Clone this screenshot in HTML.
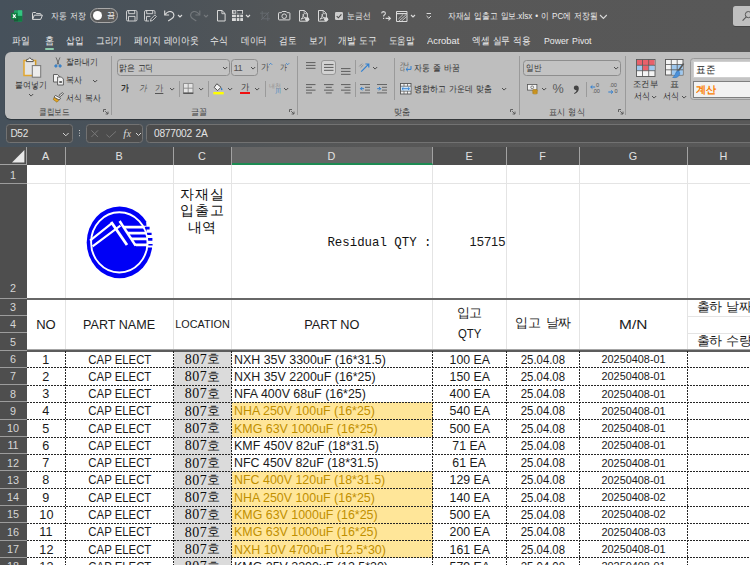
<!DOCTYPE html>
<html lang="ko"><head><meta charset="utf-8"><title>자재실 입출고 일보.xlsx - Excel</title>
<style>
*{box-sizing:border-box;margin:0;padding:0}
html,body{width:750px;height:565px;overflow:hidden}
body{position:relative;font-family:"Liberation Sans",sans-serif;font-size:11px;color:#e6e6e6;
 background:linear-gradient(to right,#46515b 0%,#4a5259 20%,#535658 38%,#575757 50%,#585858 100%)}
.abs,.ab{position:absolute}
.ab{white-space:nowrap;line-height:12px;height:12px;overflow:visible;word-spacing:1px;transform-origin:0 50%}
svg{position:absolute;overflow:visible}
/* ribbon */
#panel{position:absolute;left:5px;top:51.7px;width:760px;height:67.3px;background:#bebebe;border-radius:6px 0 0 6px;box-shadow:0 1px 1px rgba(20,25,30,.55)}
#panel .ab{color:#333}
#panel .lbl{color:#555}

.isep{position:absolute;width:1.2px;background:#a2a2a2}
.box{position:absolute;border:1px solid #8e8e8e;border-radius:3.5px;background:#c3c3c3}
.dd{position:absolute;width:5px;height:5px}
/* formula bar */
.fbox{position:absolute;top:124.3px;height:18.4px;border:1px solid #727272;border-radius:3.5px;background:#4c4c4c}
/* sheet */
#colhdr{position:absolute;left:0;top:147px;width:750px;height:18px;background:#4e4e4e}
.ch{position:absolute;top:0;height:18px;border-right:1px solid #a2a2a2;text-align:center;font-size:10.8px;line-height:19px;color:#e2e2e2}
.ch.sel{background:#656565;border-bottom:2px solid #1d8a52}
#corner{position:absolute;left:0;top:0;width:26.5px;height:18px;border-right:1px solid #a2a2a2;border-bottom:1px solid #a2a2a2}
#rowhdr{position:absolute;left:0;top:165px;width:26.5px;height:400px;background:#4e4e4e}
.rh{position:absolute;left:0;width:26.5px;border-bottom:1px solid #9c9c9c;text-align:center;font-size:10.8px;color:#d6d6d6;line-height:17px}
.rh span{position:absolute;left:0;width:26px;bottom:-0.2px;height:16px;line-height:16px}
#grid{position:absolute;left:26.5px;top:165px;width:724px;height:400px;background:#fff;overflow:hidden;color:#1a1a1a}
#grid div{position:absolute}
.vg{top:0;width:1px;height:185.5px;background:#e4e4e4}
.hg{left:0;width:724px;height:1px;background:#e4e4e4}
.vd{width:1px;top:186px;height:220px;background:repeating-linear-gradient(to bottom,#262626 0,#262626 2px,transparent 2px,transparent 3px)}
.hd{left:0;width:724px;height:1px;background:repeating-linear-gradient(to right,#262626 0,#262626 2px,transparent 2px,transparent 3px)}
.c{height:17.27px;line-height:17.3px;font-size:13.3px;text-align:center;white-space:nowrap;overflow:hidden}
.c b{display:inline-block;font-weight:normal;transform:scaleX(.855);transform-origin:50% 50%}
.c.l{text-align:left}
.c.l b{transform-origin:0 50% !important}
.c.s{font-size:11.4px}
.c.sf{font-family:"Liberation Serif",serif;font-size:14px;color:#0c0c0c}
.c.sf b{transform:none;letter-spacing:.55px}
.y{color:#bf8f00}
.fy{background:#ffe699}
.fg{background:#dbdbdb}
.c.k b{transform:none;letter-spacing:-0.6px;font-size:13px}
.ttl{text-align:center;font-family:"Liberation Sans",sans-serif;font-size:14px;line-height:16.6px;color:#111;letter-spacing:.6px;padding-right:.4px}
.ttl b{display:block;font-weight:normal}
.mono{font-family:"Liberation Mono",monospace;font-size:12.4px;line-height:14px;color:#111;white-space:nowrap;text-align:right}
.c.sf i{font-family:"Liberation Sans",sans-serif;font-style:normal;font-size:12.8px;letter-spacing:0;color:#151515;position:relative;top:-0.6px}
</style></head>
<body>
<!-- title bar -->
<div id="titlebar">
<svg style="left:10.5px;top:9.5px" width="11.5" height="12" viewBox="0 0 11.5 12"><rect x="3" y="0.3" width="8.2" height="11.2" rx="1" fill="#21a366"/><rect x="7" y="0.3" width="4.2" height="5.6" fill="#33c481"/><rect x="7" y="5.9" width="4.2" height="5.6" fill="#107c41"/><rect x="3" y="5.9" width="4" height="5.6" fill="#185c37"/><rect x="0" y="2.8" width="6.6" height="6.6" rx="0.8" fill="#107c41"/><path d="M1.9 4.3L4.7 7.9M4.7 4.3L1.9 7.9" stroke="#fff" stroke-width="1.1"/></svg>
<svg style="left:32px;top:11.5px" width="11" height="8" viewBox="0 0 11 8"><path d="M0.5 7.2V1.2Q0.5 0.5 1.2 0.5H3.6L4.6 1.6H8.2Q8.9 1.6 8.9 2.3V3.1" fill="none" stroke="#dadada" stroke-width="1"/><path d="M0.6 7.4L2.3 3.2H10.4L8.7 7.4Z" fill="none" stroke="#dadada" stroke-width="1" stroke-linejoin="round"/></svg>
<div class="ab" style="left:51px;top:9.6px;font-size:9.4px;transform:scaleX(0.871);">자동 저장</div>
<div class="abs" style="left:90px;top:8px;width:28px;height:14.5px;border:1px solid #a9a9a9;border-radius:8px;background:#5a5a5a"></div>
<div class="abs" style="left:92.6px;top:10.6px;width:9.2px;height:9.2px;border-radius:5px;background:#fff"></div>
<div class="ab" style="left:106.5px;top:9.6px;font-size:8.2px;color:#f0f0f0;">끔</div>
<svg style="left:125.5px;top:10px" width="11.5" height="11.5" viewBox="0 0 11.5 11.5"><rect x="0.5" y="0.5" width="10.5" height="10.5" rx="1.4" fill="none" stroke="#dadada" stroke-width=".9"/><path d="M2.7 0.6V3.7H8.7V0.6M2.5 10.9V6.4H9V10.9" fill="none" stroke="#dadada" stroke-width=".9"/></svg>
<svg style="left:144px;top:10px" width="13" height="11.5" viewBox="0 0 13 11.5"><path d="M5 11H1.9Q0.5 11 0.5 9.6V1.9Q0.5 0.5 1.9 0.5H9.6Q11 0.5 11 1.9V4.4" fill="none" stroke="#dadada" stroke-width=".9"/><path d="M2.7 0.6V3.7H8.7V0.6M2.5 10.9V6.4H6.4" fill="none" stroke="#dadada" stroke-width=".9"/><path d="M6.4 11.2L7 8.8L10.8 5L12.4 6.6L8.6 10.4Z" fill="none" stroke="#dadada" stroke-width=".85"/></svg>
<svg style="left:164px;top:10.3px" width="10.5" height="11.5" viewBox="0 0 10.5 11.5"><path d="M0.7 0.6V5H5.1" fill="none" stroke="#dadada" stroke-width="1.1"/><path d="M0.9 4.8Q3.6 0.9 6.9 1.6Q10 2.6 9.9 5.6Q9.6 7.6 7.6 8.8L4.2 11" fill="none" stroke="#dadada" stroke-width="1.1"/></svg>
<svg style="left:178.0px;top:15.2px" width="4" height="2" viewBox="0 0 4 2"><path d="M0 0L2.0 2L4 0" fill="none" stroke="#dadada" stroke-width="1.1"/></svg>
<svg style="left:190px;top:10.3px" width="10.5" height="11.5" viewBox="0 0 10.5 11.5"><g transform="translate(10.5,0) scale(-1,1)"><path d="M0.7 0.6V5H5.1" fill="none" stroke="#74787c" stroke-width="1.1"/><path d="M0.9 4.8Q3.6 0.9 6.9 1.6Q10 2.6 9.9 5.6Q9.6 7.6 7.6 8.8L4.2 11" fill="none" stroke="#74787c" stroke-width="1.1"/></g></svg>
<svg style="left:203.7px;top:15.2px" width="4" height="2" viewBox="0 0 4 2"><path d="M0 0L2.0 2L4 0" fill="none" stroke="#74787c" stroke-width="1.1"/></svg>
<svg style="left:216.8px;top:10px" width="8.6" height="11.5" viewBox="0 0 8.6 11.5"><path d="M0.5 0.5H5L8.1 3.6V11H0.5Z" fill="none" stroke="#dadada" stroke-width="1" stroke-linejoin="round"/><path d="M4.9 0.6V3.7H8" fill="none" stroke="#dadada" stroke-width=".9"/></svg>
<svg style="left:232.2px;top:10.2px" width="11" height="11" viewBox="0 0 11 11"><rect x="0" y="0" width="11" height="11" fill="#dadada"/><rect x="5.2" y="0.9" width="4.9" height="2.8" fill="#4d5257"/><path d="M0 4.3H11M0 7.6H11M4.4 0V11M7.8 4.3V11" stroke="#4d5257" stroke-width=".9" fill="none"/><path d="M1 1.2H3.6M2.3 1.2V3.4M1.2 2.4H3.4" stroke="#4d5257" stroke-width=".6"/></svg>
<svg style="left:246.3px;top:15.2px" width="4" height="2" viewBox="0 0 4 2"><path d="M0 0L2.0 2L4 0" fill="none" stroke="#dadada" stroke-width="1.1"/></svg>
<svg style="left:260px;top:11px" width="10" height="10" viewBox="0 0 10 10"><path d="M2.2 0V7.8H10M0 2.2H7.8V10M1 9L9 1" fill="none" stroke="#666b70" stroke-width=".9"/></svg>
<svg style="left:278px;top:11.3px" width="12.5" height="9.5" viewBox="0 0 12.5 9.5"><path d="M0.5 2.3Q0.5 1.7 1.1 1.7H3.3L4.2 0.5H8.2L9.1 1.7H11.3Q11.9 1.7 11.9 2.3V8.3Q11.9 8.9 11.3 8.9H1.1Q0.5 8.9 0.5 8.3Z" fill="none" stroke="#dadada"/><circle cx="6.2" cy="5.2" r="2.3" fill="none" stroke="#dadada"/></svg>
<svg style="left:299px;top:9.8px" width="10.5" height="11.8" viewBox="0 0 10.5 11.8"><path d="M0.5 0.5H5.4L8.4 3.5V11.2H0.5Z" fill="none" stroke="#dadada" stroke-linejoin="round"/><path d="M5.2 0.6V3.7H8.3" fill="none" stroke="#dadada" stroke-width=".8"/><path d="M2 9.2Q3.6 8 4.4 5.3Q4.7 3.9 4.1 4.1Q3.6 4.6 4.6 6.4Q5.6 8.2 7.2 8.4Q8 8.3 7.2 7.8Q5.4 7.4 2 9.2Z" fill="none" stroke="#dadada" stroke-width=".9"/><circle cx="8.2" cy="9.3" r="2.1" fill="#dadada"/></svg>
<svg style="left:318.3px;top:9.8px" width="10.5" height="11.8" viewBox="0 0 10.5 11.8"><path d="M0.5 0.5H5.4L8.4 3.5V11.2H0.5Z" fill="none" stroke="#dadada" stroke-linejoin="round"/><path d="M5.2 0.6V3.7H8.3" fill="none" stroke="#dadada" stroke-width=".8"/><path d="M2 9.2Q3.6 8 4.4 5.3Q4.7 3.9 4.1 4.1Q3.6 4.6 4.6 6.4Q5.6 8.2 7.2 8.4Q8 8.3 7.2 7.8Q5.4 7.4 2 9.2Z" fill="none" stroke="#dadada" stroke-width=".9"/><circle cx="8.2" cy="9.3" r="2.1" fill="#dadada"/></svg>
<svg style="left:335px;top:12.3px" width="8" height="8" viewBox="0 0 8 8"><rect x="0" y="0" width="8" height="8" rx="1.2" fill="#cdcdcd"/><path d="M1.7 4.1L3.4 5.8L6.4 2.3" fill="none" stroke="#4a4a4a" stroke-width="1.1"/></svg>
<div class="ab" style="left:346.6px;top:9.9px;font-size:9.2px;transform:scaleX(0.863);">눈금선</div>
<svg style="left:380.5px;top:11px" width="10" height="10" viewBox="0 0 10 10"><path d="M0.6 2.4Q0.8 0.6 2.6 0.6Q4.4 0.7 4.4 2.3Q4.4 3.3 3.3 4Q2.6 4.5 2.6 5.6" fill="none" stroke="#dadada" stroke-width="1.1"/><rect x="2" y="6.8" width="1.2" height="1.2" fill="#dadada"/><path d="M4.6 7.4H9.3M7.4 5.4L9.4 7.4L7.4 9.4" fill="none" stroke="#dadada" stroke-width="1.1"/></svg>
<svg style="left:396px;top:10.5px" width="11.5" height="11" viewBox="0 0 11.5 11"><path d="M0.5 0.5H11V10.5H0.5Z" fill="none" stroke="#dadada" stroke-width="1"/><path d="M0.5 2.6H11" stroke="#dadada" stroke-width="1.2"/><path d="M3 10L10.4 3.4M5.4 10.2L10.6 5.6M2.4 8L7 3.6" fill="none" stroke="#dadada" stroke-width=".8"/></svg>
<svg style="left:411.3px;top:15.2px" width="4" height="2" viewBox="0 0 4 2"><path d="M0 0L2.0 2L4 0" fill="none" stroke="#dadada" stroke-width="1.1"/></svg>
<svg style="left:426px;top:12.6px" width="5.6" height="6" viewBox="0 0 5.6 6"><path d="M0.6 0.5H5M0.6 3L2.8 5.2L5 3" fill="none" stroke="#dadada" stroke-width="1"/></svg>
<div class="ab" style="left:448px;top:9.7px;font-size:9.4px;transform:scaleX(0.860);color:#ececec;">자재실 입출고 일보.xlsx • 이 PC에 저장됨</div>
<svg style="left:600.4px;top:14.5px" width="6.8" height="3.4" viewBox="0 0 6.8 3.4"><path d="M0 0L3.4 3.4L6.8 0" fill="none" stroke="#dadada" stroke-width="1.1"/></svg>
<div class="abs" style="left:733.4px;top:5.8px;width:30px;height:20.4px;border-radius:2.5px;background:#bfbfbf;box-shadow:0 1px 0 rgba(0,0,0,.22)"></div>
<svg style="left:741.5px;top:11px" width="9" height="10" viewBox="0 0 9 10"><circle cx="6.4" cy="3.6" r="3.1" fill="none" stroke="#555" stroke-width="1"/><path d="M4.3 5.9L0.6 9.6" stroke="#555" stroke-width="1.1"/></svg>
</div>
<!-- tabs -->
<div id="tabs">
<div class="ab" style="left:12px;top:35.3px;font-size:9.8px;transform:scaleX(0.885);color:#ececec;">파일</div>
<div class="ab" style="left:45px;top:35.3px;font-size:9.8px;transform:scaleX(0.913);color:#ececec;">홈</div>
<div class="ab" style="left:66px;top:35.3px;font-size:9.8px;transform:scaleX(0.865);color:#ececec;">삽입</div>
<div class="ab" style="left:96px;top:35.3px;font-size:9.8px;transform:scaleX(0.856);color:#ececec;">그리기</div>
<div class="ab" style="left:134px;top:35.3px;font-size:9.8px;transform:scaleX(0.878);color:#ececec;">페이지 레이아웃</div>
<div class="ab" style="left:210px;top:35.3px;font-size:9.8px;transform:scaleX(0.885);color:#ececec;">수식</div>
<div class="ab" style="left:241px;top:35.3px;font-size:9.8px;transform:scaleX(0.856);color:#ececec;">데이터</div>
<div class="ab" style="left:279.2px;top:35.3px;font-size:9.8px;transform:scaleX(0.865);color:#ececec;">검토</div>
<div class="ab" style="left:309px;top:35.3px;font-size:9.8px;transform:scaleX(0.875);color:#ececec;">보기</div>
<div class="ab" style="left:338.2px;top:35.3px;font-size:9.8px;transform:scaleX(0.880);color:#ececec;">개발 도구</div>
<div class="ab" style="left:389.2px;top:35.3px;font-size:9.8px;transform:scaleX(0.849);color:#ececec;">도움말</div>
<div class="ab" style="left:427.4px;top:35.3px;font-size:9.6px;transform:scaleX(0.979);color:#ececec;">Acrobat</div>
<div class="ab" style="left:472px;top:35.3px;font-size:9.8px;transform:scaleX(0.870);color:#ececec;">엑셀 실무 적용</div>
<div class="ab" style="left:544px;top:35.3px;font-size:9.6px;transform:scaleX(0.911);color:#ececec;">Power Pivot</div>
<div class="abs" style="left:45px;top:48.4px;width:8.7px;height:1.6px;border-radius:1px;background:#8ccbab"></div>
</div>
<!-- ribbon -->
<div id="ribbon">
<div id="panel"></div>
<svg style="left:23px;top:56.6px" width="19" height="21.5" viewBox="0 0 19 21.5"><path d="M1 3.4H12.6V18.6H1Z" fill="#e3e3e3" stroke="#e2a62e" stroke-width="1.5"/><path d="M12.6 3.4V9" stroke="#c9952b" stroke-width="1"/><path d="M3.4 4.6V3.2Q3.4 2.4 4.2 2.4H5.2L6.8 0.6L8.4 2.4H9.4Q10.2 2.4 10.2 3.2V4.6Z" fill="#f4f4f4" stroke="#444" stroke-width=".9" stroke-linejoin="round"/><rect x="9.3" y="8.6" width="8.4" height="11.6" fill="#ececec" stroke="#767676" stroke-width="1"/></svg>
<div class="ab" style="left:15px;top:79.3px;font-size:9.4px;transform:scaleX(0.881);color:#2e2e2e;">붙여넣기</div>
<svg style="left:29.4px;top:94.2px" width="4.2" height="2.1" viewBox="0 0 4.2 2.1"><path d="M0 0L2.1 2.1L4.2 0" fill="none" stroke="#4c4c4c" stroke-width="1"/></svg>
<svg style="left:53.6px;top:57.3px" width="8" height="11" viewBox="0 0 8 11"><path d="M2 0.4L5 7.6M6 0.4L3 7.6" stroke="#555" stroke-width=".8" fill="none"/><circle cx="1.9" cy="9" r="1.15" fill="#5b9bd5" stroke="#1e6fbf" stroke-width=".8"/><circle cx="6.1" cy="9" r="1.15" fill="#5b9bd5" stroke="#1e6fbf" stroke-width=".8"/></svg>
<div class="ab" style="left:66px;top:56.3px;font-size:9.4px;transform:scaleX(0.881);color:#2e2e2e;">잘라내기</div>
<svg style="left:52.5px;top:74px" width="11" height="11.5" viewBox="0 0 11 11.5"><path d="M0.5 0.5H4.6L6.4 2.3V8H0.5Z" fill="#f2f2f2" stroke="#555" stroke-width=".9"/><path d="M4.6 3H8.4L10.4 5V11H4.6Z" fill="#f2f2f2" stroke="#555" stroke-width=".9"/><rect x="6.3" y="7" width="2.6" height="2" fill="#666"/></svg>
<div class="ab" style="left:66px;top:74.3px;font-size:9.4px;transform:scaleX(0.895);color:#2e2e2e;">복사</div>
<svg style="left:92.9px;top:79.5px" width="4.2" height="2.1" viewBox="0 0 4.2 2.1"><path d="M0 0L2.1 2.1L4.2 0" fill="none" stroke="#4c4c4c" stroke-width="1"/></svg>
<svg style="left:53px;top:91.5px" width="11" height="10.5" viewBox="0 0 11 10.5"><path d="M6 3.2L9.5 0.6L10.5 1.8L7.2 4.6Z" fill="#ddd" stroke="#444" stroke-width=".8"/><path d="M2.4 3.4L7.6 6.2L6.2 8L1 5.2Z" fill="#f4f4f4" stroke="#444" stroke-width=".8"/><path d="M1 5.6L5.8 8.4L4 10.2L0.3 7.6Z" fill="#e8a723" stroke="#8a6a1a" stroke-width=".6"/></svg>
<div class="ab" style="left:66px;top:91.5px;font-size:9.4px;transform:scaleX(0.876);color:#2e2e2e;">서식 복사</div>
<div class="ab" style="left:39px;top:106.0px;font-size:9.4px;transform:scaleX(0.852);color:#3e3e3e;">클립보드</div>
<svg style="left:103px;top:109px" width="5.5" height="5.5" viewBox="0 0 5.5 5.5"><path d="M0.5 3V0.5H3M2.2 2.2L5 5M5 2.6V5H2.6" fill="none" stroke="#555" stroke-width=".9"/></svg>
<div class="isep" style="left:111px;top:55.5px;height:59.0px;background:#9a9a9a"></div>
<div class="box" style="left:117px;top:59.4px;width:112.5px;height:16.3px"></div>
<div class="ab" style="left:119.3px;top:61.6px;font-size:9.2px;transform:scaleX(0.867);color:#2e2e2e;">맑은 고딕</div>
<svg style="left:222.9px;top:67.0px" width="4.2" height="2.1" viewBox="0 0 4.2 2.1"><path d="M0 0L2.1 2.1L4.2 0" fill="none" stroke="#4c4c4c" stroke-width="1"/></svg>
<div class="box" style="left:231.2px;top:59.4px;width:26.5px;height:16.3px"></div>
<div class="ab" style="left:233.4px;top:61.7px;font-size:9.4px;letter-spacing:-0.30px;color:#555;">11</div>
<svg style="left:250.9px;top:67.0px" width="4.2" height="2.1" viewBox="0 0 4.2 2.1"><path d="M0 0L2.1 2.1L4.2 0" fill="none" stroke="#4c4c4c" stroke-width="1"/></svg>
<div class="ab" style="left:261.3px;top:61.3px;font-size:9.2px;transform:scaleX(0.902);color:#444;">가</div>
<svg style="left:269.3px;top:62.6px" width="3.2" height="1.9" viewBox="0 0 3.2 1.9"><path d="M0.2 1.8L1.7 0.3L3.2 1.8" fill="none" stroke="#2f7fd0" stroke-width=".9"/></svg>
<div class="ab" style="left:279.8px;top:61.9px;font-size:8px;transform:scaleX(0.861);color:#444;">가</div>
<svg style="left:286.2px;top:63px" width="3.2" height="1.9" viewBox="0 0 3.2 1.9"><path d="M0.2 0.2L1.7 1.7L3.2 0.2" fill="none" stroke="#2f7fd0" stroke-width=".9"/></svg>
<div class="ab" style="left:121px;top:82.2px;font-size:8.8px;transform:scaleX(0.878);color:#2e2e2e;font-weight:bold;">가</div>
<div class="ab" style="left:139px;top:82.2px;font-size:8.8px;transform:scaleX(0.878);color:#555;font-style:italic;">가</div>
<div class="ab" style="left:155.2px;top:82.0px;font-size:8.8px;transform:scaleX(0.927);color:#555;border-bottom:1px solid #555;height:11.6px;">가</div>
<svg style="left:169.6px;top:88.0px" width="4.2" height="2.1" viewBox="0 0 4.2 2.1"><path d="M0 0L2.1 2.1L4.2 0" fill="none" stroke="#4c4c4c" stroke-width="1"/></svg>
<div class="isep" style="left:178.5px;top:81px;height:15.5px;background:#9a9a9a"></div>
<svg style="left:183px;top:83px" width="10.6" height="10.6" viewBox="0 0 10.6 10.6"><path d="M0.5 0.5H10V10H0.5ZM0.5 5.2H10M5.2 0.5V10" fill="#e4e4e4" stroke="#8a8a8a" stroke-width=".9"/><path d="M0.2 10.2H10.4" stroke="#333" stroke-width="1"/></svg>
<svg style="left:198.5px;top:88.0px" width="4.2" height="2.1" viewBox="0 0 4.2 2.1"><path d="M0 0L2.1 2.1L4.2 0" fill="none" stroke="#4c4c4c" stroke-width="1"/></svg>
<div class="isep" style="left:208px;top:81px;height:15.5px;background:#9a9a9a"></div>
<svg style="left:212.5px;top:82.5px" width="11" height="12" viewBox="0 0 11 12"><path d="M3.8 0.8L1.2 4.4L4.6 7.6L8 4.2Z" fill="#f4f4f4" stroke="#444" stroke-width=".9"/><path d="M8.6 4.6Q9.8 6.2 9.3 7Q8.6 7.6 8.1 6.8Q7.9 6 8.6 4.6Z" fill="#1e6fbf"/><rect x="0.3" y="9" width="10.4" height="2.4" fill="#ffff00"/></svg>
<svg style="left:227.7px;top:88.0px" width="4.2" height="2.1" viewBox="0 0 4.2 2.1"><path d="M0 0L2.1 2.1L4.2 0" fill="none" stroke="#4c4c4c" stroke-width="1"/></svg>
<div class="ab" style="left:241px;top:80.6px;font-size:9px;transform:scaleX(0.927);color:#333;">가</div>
<div class="abs" style="left:239.7px;top:91.8px;width:10.6px;height:2.4px;background:#f01010"></div>
<svg style="left:254.9px;top:88.0px" width="4.2" height="2.1" viewBox="0 0 4.2 2.1"><path d="M0 0L2.1 2.1L4.2 0" fill="none" stroke="#4c4c4c" stroke-width="1"/></svg>
<div class="isep" style="left:264.5px;top:81px;height:15.5px;background:#9a9a9a"></div>
<div class="ab" style="left:269px;top:79.7px;font-size:5.6px;letter-spacing:-0.40px;color:#909090;">내천</div>
<div class="ab" style="left:275px;top:84.5px;font-size:6px;color:#3b82c4;">川</div>
<svg style="left:284.3px;top:88.0px" width="4.2" height="2.1" viewBox="0 0 4.2 2.1"><path d="M0 0L2.1 2.1L4.2 0" fill="none" stroke="#4c4c4c" stroke-width="1"/></svg>
<div class="ab" style="left:191.3px;top:106.0px;font-size:9.4px;transform:scaleX(0.907);color:#3e3e3e;">글꼴</div>
<svg style="left:289px;top:109px" width="5.5" height="5.5" viewBox="0 0 5.5 5.5"><path d="M0.5 3V0.5H3M2.2 2.2L5 5M5 2.6V5H2.6" fill="none" stroke="#555" stroke-width=".9"/></svg>
<div class="isep" style="left:297px;top:55.5px;height:59.0px;background:#9a9a9a"></div>
<svg style="left:306px;top:62px" width="9.5" height="12" viewBox="0 0 9.5 12"><rect x="0.0" y="0.0" width="9.5" height="1.1" fill="#666"/><rect x="0.0" y="2.9" width="9.5" height="1.1" fill="#666"/><rect x="0.0" y="5.8" width="9.5" height="1.1" fill="#666"/></svg>
<div class="abs" style="left:320.7px;top:59.7px;width:15px;height:15.8px;border:1px solid #979797;border-radius:3px;background:#d2d2d2"></div>
<svg style="left:323.7px;top:63.7px" width="9.5" height="12" viewBox="0 0 9.5 12"><rect x="0.0" y="0.0" width="9.5" height="1.1" fill="#666"/><rect x="0.0" y="2.9" width="9.5" height="1.1" fill="#666"/><rect x="0.0" y="5.8" width="9.5" height="1.1" fill="#666"/></svg>
<svg style="left:341px;top:67.5px" width="9.5" height="12" viewBox="0 0 9.5 12"><rect x="0.0" y="0.0" width="9.5" height="1.1" fill="#666"/><rect x="0.0" y="2.9" width="9.5" height="1.1" fill="#666"/><rect x="0.0" y="5.8" width="9.5" height="1.1" fill="#666"/></svg>
<svg style="left:306px;top:84.3px" width="9.5" height="12" viewBox="0 0 9.5 12"><rect x="0.0" y="0.0" width="9.5" height="1.1" fill="#666"/><rect x="0.0" y="2.8" width="6" height="1.1" fill="#666"/><rect x="0.0" y="5.6" width="9.5" height="1.1" fill="#666"/><rect x="0.0" y="8.4" width="6" height="1.1" fill="#666"/></svg>
<svg style="left:323.7px;top:84.3px" width="9.5" height="12" viewBox="0 0 9.5 12"><rect x="0.0" y="0.0" width="9.5" height="1.1" fill="#666"/><rect x="1.8" y="2.8" width="6" height="1.1" fill="#666"/><rect x="0.0" y="5.6" width="9.5" height="1.1" fill="#666"/><rect x="1.8" y="8.4" width="6" height="1.1" fill="#666"/></svg>
<svg style="left:341px;top:84.3px" width="9.5" height="12" viewBox="0 0 9.5 12"><rect x="0.0" y="0.0" width="9.5" height="1.1" fill="#666"/><rect x="3.5" y="2.8" width="6" height="1.1" fill="#666"/><rect x="0.0" y="5.6" width="9.5" height="1.1" fill="#666"/><rect x="3.5" y="8.4" width="6" height="1.1" fill="#666"/></svg>
<div class="isep" style="left:354.7px;top:60px;height:14px;background:#9a9a9a"></div>
<div class="isep" style="left:354.7px;top:81.5px;height:15.0px;background:#9a9a9a"></div>
<svg style="left:359px;top:61.5px" width="12" height="11" viewBox="0 0 12 11"><path d="M2.2 9.6L9.4 2.4M6.4 2H9.8V5.4" fill="none" stroke="#2f7fd0" stroke-width="1.2"/><path d="M0.3 4.4L3 1.7M1.6 5.7L4.3 3" stroke="#777" stroke-width=".8"/></svg>
<svg style="left:373.4px;top:67.0px" width="4.2" height="2.1" viewBox="0 0 4.2 2.1"><path d="M0 0L2.1 2.1L4.2 0" fill="none" stroke="#4c4c4c" stroke-width="1"/></svg>
<svg style="left:360px;top:84.3px" width="10" height="9.5" viewBox="0 0 10 9.5"><rect x="0" y="0" width="10" height="1" fill="#666"/><rect x="5" y="2.8" width="5" height="1" fill="#666"/><rect x="5" y="5.6" width="5" height="1" fill="#666"/><rect x="0" y="8.4" width="10" height="1" fill="#666"/><path d="M4 4.7H0.6M2.2 3L0.5 4.7L2.2 6.4" fill="none" stroke="#2f7fd0" stroke-width="1"/></svg>
<svg style="left:376.5px;top:84.3px" width="10" height="9.5" viewBox="0 0 10 9.5"><rect x="0" y="0" width="10" height="1" fill="#666"/><rect x="5" y="2.8" width="5" height="1" fill="#666"/><rect x="5" y="5.6" width="5" height="1" fill="#666"/><rect x="0" y="8.4" width="10" height="1" fill="#666"/><path d="M0.2 4.7H3.6M2 3L3.7 4.7L2 6.4" fill="none" stroke="#2f7fd0" stroke-width="1"/></svg>
<div class="isep" style="left:393.7px;top:58px;height:41.5px;background:#9a9a9a"></div>
<div class="ab" style="left:400px;top:57.8px;font-size:5px;letter-spacing:-0.60px;color:#3c3c3c;">가나</div>
<div class="ab" style="left:400px;top:62.6px;font-size:5px;color:#3c3c3c;">다</div>
<svg style="left:404.5px;top:65.5px" width="7" height="7" viewBox="0 0 7 7"><path d="M6 0V3.4H1.2M2.9 1.6L1 3.4L2.9 5.2" fill="none" stroke="#2f7fd0" stroke-width="1"/></svg>
<div class="ab" style="left:414px;top:61.5px;font-size:9.4px;transform:scaleX(0.871);color:#2e2e2e;">자동 줄 바꿈</div>
<svg style="left:400px;top:83.2px" width="11.5" height="11.5" viewBox="0 0 11.5 11.5"><rect x="0.5" y="0.5" width="10.5" height="10.5" fill="#f2f2f2" stroke="#555" stroke-width=".9"/><rect x="1" y="3.4" width="9.5" height="4.6" fill="#cfe4f7"/><path d="M0.5 3.2H11M0.5 8.2H11M4 0.5V3.2M7.5 0.5V3.2M4 8.2V11M7.5 8.2V11" stroke="#555" stroke-width=".7" fill="none"/><path d="M2 5.7H9.4M3.4 4.4L2 5.7L3.4 7M8 4.4L9.4 5.7L8 7" fill="none" stroke="#2f7fd0" stroke-width=".9"/></svg>
<div class="ab" style="left:414px;top:82.6px;font-size:9.4px;transform:scaleX(0.879);color:#2e2e2e;">병합하고 가운데 맞춤</div>
<svg style="left:501.9px;top:88.0px" width="4.2" height="2.1" viewBox="0 0 4.2 2.1"><path d="M0 0L2.1 2.1L4.2 0" fill="none" stroke="#4c4c4c" stroke-width="1"/></svg>
<div class="ab" style="left:394px;top:106.0px;font-size:9.4px;transform:scaleX(0.907);color:#3e3e3e;">맞춤</div>
<svg style="left:510px;top:109px" width="5.5" height="5.5" viewBox="0 0 5.5 5.5"><path d="M0.5 3V0.5H3M2.2 2.2L5 5M5 2.6V5H2.6" fill="none" stroke="#555" stroke-width=".9"/></svg>
<div class="isep" style="left:518.5px;top:55.5px;height:59.0px;background:#9a9a9a"></div>
<div class="box" style="left:523.4px;top:59.6px;width:97.2px;height:16.2px"></div>
<div class="ab" style="left:526.4px;top:61.8px;font-size:9.2px;transform:scaleX(0.849);color:#2e2e2e;">일반</div>
<svg style="left:613.9px;top:67.0px" width="4.2" height="2.1" viewBox="0 0 4.2 2.1"><path d="M0 0L2.1 2.1L4.2 0" fill="none" stroke="#4c4c4c" stroke-width="1"/></svg>
<svg style="left:527px;top:83.5px" width="11.5" height="10" viewBox="0 0 11.5 10"><rect x="0.5" y="0.5" width="9.4" height="5.6" fill="#f2f2f2" stroke="#555" stroke-width=".8"/><circle cx="5.2" cy="3.3" r="1.4" fill="none" stroke="#555" stroke-width=".7"/><ellipse cx="8" cy="6.4" rx="2.6" ry="1" fill="#e8a723" stroke="#8a6a1a" stroke-width=".5"/><ellipse cx="8" cy="7.8" rx="2.6" ry="1" fill="#e8a723" stroke="#8a6a1a" stroke-width=".5"/><ellipse cx="8" cy="9" rx="2.6" ry="1" fill="#e8a723" stroke="#8a6a1a" stroke-width=".5"/></svg>
<svg style="left:542.2px;top:88.0px" width="4.2" height="2.1" viewBox="0 0 4.2 2.1"><path d="M0 0L2.1 2.1L4.2 0" fill="none" stroke="#4c4c4c" stroke-width="1"/></svg>
<div class="ab" style="left:552.6px;top:82.6px;font-size:12.6px;color:#5a5a5a;">%</div>
<svg style="left:573px;top:84.5px" width="6.5" height="9.5" viewBox="0 0 6.5 9.5"><path d="M3.2 0.4Q5.8 0.4 5.8 3.4Q5.8 7 1.4 9L1 8.2Q3.6 6.8 3.6 5.2Q0.8 5.2 0.8 2.8Q0.8 0.4 3.2 0.4Z" fill="#444"/></svg>
<div class="isep" style="left:585.5px;top:81.5px;height:15.0px;background:#9a9a9a"></div>
<div class="ab" style="left:596px;top:79.4px;font-size:5.6px;color:#555;">0</div>
<div class="ab" style="left:592.5px;top:85.3px;font-size:5.6px;letter-spacing:-0.20px;color:#555;">.00</div>
<svg style="left:590px;top:84.5px" width="5.5" height="4" viewBox="0 0 5.5 4"><path d="M5.2 2H0.8M2.4 0.4L0.7 2L2.4 3.6" fill="none" stroke="#2f7fd0" stroke-width="1"/></svg>
<div class="ab" style="left:609.5px;top:79.4px;font-size:5.6px;letter-spacing:-0.20px;color:#555;">.00</div>
<div class="ab" style="left:614.5px;top:85.3px;font-size:5.6px;color:#555;">0</div>
<svg style="left:607.5px;top:90.3px" width="5.5" height="4" viewBox="0 0 5.5 4"><path d="M0.3 2H4.7M3.1 0.4L4.8 2L3.1 3.6" fill="none" stroke="#2f7fd0" stroke-width="1"/></svg>
<div class="ab" style="left:549.2px;top:106.0px;font-size:9.4px;transform:scaleX(0.902);color:#3e3e3e;">표시 형식</div>
<svg style="left:618px;top:109px" width="5.5" height="5.5" viewBox="0 0 5.5 5.5"><path d="M0.5 3V0.5H3M2.2 2.2L5 5M5 2.6V5H2.6" fill="none" stroke="#555" stroke-width=".9"/></svg>
<div class="isep" style="left:625px;top:55.5px;height:59.0px;background:#9a9a9a"></div>
<svg style="left:636px;top:59px" width="19.5" height="18" viewBox="0 0 19.5 18"><rect x="0.5" y="0.5" width="18.5" height="17" fill="#f4f4f4" stroke="#555" stroke-width=".9"/><rect x="1" y="1" width="17.5" height="5.2" fill="#e8616b"/><rect x="6.6" y="6.4" width="6" height="5.2" fill="#e8616b"/><rect x="1" y="6.4" width="5.4" height="5.2" fill="#9fc8ee"/><rect x="12.8" y="6.4" width="5.7" height="5.2" fill="#9fc8ee"/><path d="M0.5 6.3H19M0.5 11.7H19M6.5 0.5V17.5M12.7 0.5V17.5" stroke="#555" stroke-width=".8" fill="none"/></svg>
<div class="ab" style="left:633px;top:78.3px;font-size:9.4px;transform:scaleX(0.924);color:#2e2e2e;">조건부</div>
<div class="ab" style="left:634px;top:90.2px;font-size:9.4px;transform:scaleX(0.884);color:#2e2e2e;">서식</div>
<svg style="left:652.2px;top:95.5px" width="4.2" height="2.1" viewBox="0 0 4.2 2.1"><path d="M0 0L2.1 2.1L4.2 0" fill="none" stroke="#4c4c4c" stroke-width="1"/></svg>
<svg style="left:665px;top:59px" width="20.5" height="19.5" viewBox="0 0 20.5 19.5"><rect x="0.5" y="0.5" width="17.5" height="15.5" fill="#f4f4f4" stroke="#555" stroke-width=".9"/><rect x="6.4" y="5.6" width="11.4" height="10.2" fill="#9fc8ee"/><path d="M0.5 5.5H18M0.5 10.8H18M6.3 0.5V16M12.2 0.5V16" stroke="#555" stroke-width=".8" fill="none"/><path d="M18.6 4.6L13 12.2" stroke="#555" stroke-width="1.6"/><path d="M13.4 11.6Q10.8 12.4 10.2 15.4Q9.4 17.6 7.6 18.4Q12.8 19.6 14.6 15.6Q15.2 13 13.4 11.6Z" fill="#4a90d9" stroke="#2b6cb0" stroke-width=".5"/></svg>
<div class="ab" style="left:670px;top:78.3px;font-size:9.4px;color:#2e2e2e;">표</div>
<div class="ab" style="left:663px;top:90.2px;font-size:9.4px;transform:scaleX(0.884);color:#2e2e2e;">서식</div>
<svg style="left:681.5px;top:95.5px" width="4.2" height="2.1" viewBox="0 0 4.2 2.1"><path d="M0 0L2.1 2.1L4.2 0" fill="none" stroke="#4c4c4c" stroke-width="1"/></svg>
<div class="abs" style="left:690px;top:58.2px;width:70px;height:41.4px;border:1px solid #9a9a9a;border-radius:3.5px;background:#c4c4c4"></div>
<div class="abs" style="left:692.8px;top:60.8px;width:60px;height:17.4px;background:#fff;border:1px solid #cfcfcf"></div>
<div class="ab" style="left:696.4px;top:64.2px;font-size:10.4px;transform:scaleX(0.958);color:#222;">표준</div>
<div class="abs" style="left:692.8px;top:80.6px;width:60px;height:17px;background:#f2f2f2;border:1px solid #7f7f7f"></div>
<div class="ab" style="left:696.4px;top:83.5px;font-size:10.4px;transform:scaleX(1.010);color:#fa7d00;font-weight:bold;">계산</div>
</div>
<!-- formula bar -->
<div id="fbar">
<div class="fbox" style="left:5.6px;width:67.2px"></div>
<div class="ab" style="left:10.4px;top:127.6px;font-size:10px;letter-spacing:-0.25px;color:#e4e4e4;">D52</div>
<svg style="left:62.5px;top:132.6px" width="5.6" height="2.8" viewBox="0 0 5.6 2.8"><path d="M0 0L2.8 2.8L5.6 0" fill="none" stroke="#d8d8d8" stroke-width="1"/></svg>
<div class="abs" style="left:79px;top:130.2px;width:1.2px;height:1.2px;background:#ccc;box-shadow:0 2.6px 0 #ccc,0 5.2px 0 #ccc"></div>
<div class="fbox" style="left:86px;width:57.4px"></div>
<svg style="left:91px;top:130.2px" width="7.4" height="7.4" viewBox="0 0 7.4 7.4"><path d="M0.4 0.4L7 7M7 0.4L0.4 7" stroke="#777" stroke-width="1" fill="none"/></svg>
<svg style="left:105.5px;top:130.5px" width="10.5" height="7" viewBox="0 0 10.5 7"><path d="M0.4 3.6L3.4 6.4L10 0.4" stroke="#777" stroke-width="1" fill="none"/></svg>
<div class="ab" style="left:123.2px;top:127.2px;font-size:11px;color:#d8d8d8;font-family:'Liberation Serif',serif;"><i>f</i></div>
<div class="ab" style="left:126.8px;top:128.2px;font-size:9.6px;color:#d8d8d8;font-family:'Liberation Serif',serif;"><i>x</i></div>
<svg style="left:135.7px;top:132.8px" width="5" height="2.5" viewBox="0 0 5 2.5"><path d="M0 0L2.5 2.5L5 0" fill="none" stroke="#d8d8d8" stroke-width="1"/></svg>
<div class="fbox" style="left:146.4px;width:620px"></div>
<div class="ab" style="left:154px;top:127.6px;font-size:10.2px;letter-spacing:-0.25px;color:#e4e4e4;">0877002 2A</div>
</div>
<!-- sheet -->
<div id="colhdr">
<div id="corner"><svg style="left:11.6px;top:3px" width="12.4" height="12.4" viewBox="0 0 12 12"><path d="M12 0V12H0Z" fill="#e9e9e9"/></svg></div>
<div class="ch" style="left:26.5px;width:39.0px">A</div>
<div class="ch" style="left:65.5px;width:108.0px">B</div>
<div class="ch" style="left:173.5px;width:58.0px">C</div>
<div class="ch sel" style="left:231.5px;width:201.0px">D</div>
<div class="ch" style="left:432.5px;width:74.0px">E</div>
<div class="ch" style="left:506.5px;width:73.0px">F</div>
<div class="ch" style="left:579.5px;width:108.0px">G</div>
<div class="ch" style="left:687.5px;width:73.0px">H</div>
</div>
<div id="rowhdr">
<div class="rh" style="top:0.00px;height:18.60px"><span>1</span></div>
<div class="rh" style="top:18.60px;height:115.00px"><span style="bottom:1.8px">2</span></div>
<div class="rh" style="top:133.60px;height:17.40px"><span>3</span></div>
<div class="rh" style="top:151.00px;height:17.20px"><span>4</span></div>
<div class="rh" style="top:168.20px;height:17.40px"><span>5</span></div>
<div class="rh" style="top:185.60px;height:17.27px"><span>6</span></div>
<div class="rh" style="top:202.87px;height:17.27px"><span>7</span></div>
<div class="rh" style="top:220.14px;height:17.27px"><span>8</span></div>
<div class="rh" style="top:237.41px;height:17.27px"><span>9</span></div>
<div class="rh" style="top:254.68px;height:17.27px"><span>10</span></div>
<div class="rh" style="top:271.95px;height:17.27px"><span>11</span></div>
<div class="rh" style="top:289.22px;height:17.27px"><span>12</span></div>
<div class="rh" style="top:306.49px;height:17.27px"><span>13</span></div>
<div class="rh" style="top:323.76px;height:17.27px"><span>14</span></div>
<div class="rh" style="top:341.03px;height:17.27px"><span>15</span></div>
<div class="rh" style="top:358.30px;height:17.27px"><span>16</span></div>
<div class="rh" style="top:375.57px;height:17.27px"><span>17</span></div>
<div class="rh" style="top:392.84px;height:17.27px"><span>18</span></div>
</div>
<div id="grid">
<div class="fg" style="left:147.0px;top:185.60px;width:58px;height:17.37px"></div>
<div class="fg" style="left:147.0px;top:202.87px;width:58px;height:17.37px"></div>
<div class="fg" style="left:147.0px;top:220.14px;width:58px;height:17.37px"></div>
<div class="fg" style="left:147.0px;top:237.41px;width:58px;height:17.37px"></div>
<div class="fy" style="left:205.0px;top:237.41px;width:201px;height:17.37px"></div>
<div class="fg" style="left:147.0px;top:254.68px;width:58px;height:17.37px"></div>
<div class="fy" style="left:205.0px;top:254.68px;width:201px;height:17.37px"></div>
<div class="fg" style="left:147.0px;top:271.95px;width:58px;height:17.37px"></div>
<div class="fg" style="left:147.0px;top:289.22px;width:58px;height:17.37px"></div>
<div class="fg" style="left:147.0px;top:306.49px;width:58px;height:17.37px"></div>
<div class="fy" style="left:205.0px;top:306.49px;width:201px;height:17.37px"></div>
<div class="fg" style="left:147.0px;top:323.76px;width:58px;height:17.37px"></div>
<div class="fy" style="left:205.0px;top:323.76px;width:201px;height:17.37px"></div>
<div class="fg" style="left:147.0px;top:341.03px;width:58px;height:17.37px"></div>
<div class="fy" style="left:205.0px;top:341.03px;width:201px;height:17.37px"></div>
<div class="fg" style="left:147.0px;top:358.30px;width:58px;height:17.37px"></div>
<div class="fy" style="left:205.0px;top:358.30px;width:201px;height:17.37px"></div>
<div class="fg" style="left:147.0px;top:375.57px;width:58px;height:17.37px"></div>
<div class="fy" style="left:205.0px;top:375.57px;width:201px;height:17.37px"></div>
<div class="fg" style="left:147.0px;top:392.84px;width:58px;height:17.37px"></div>
<div class="vg" style="left:38.5px"></div>
<div class="vg" style="left:146.5px"></div>
<div class="vg" style="left:204.5px"></div>
<div class="vg" style="left:405.5px"></div>
<div class="vg" style="left:479.5px"></div>
<div class="vg" style="left:552.5px"></div>
<div class="vg" style="left:660.5px"></div>
<div class="hg" style="top:18.1px"></div>
<div class="hg" style="top:150.5px;left:661.0px"></div>
<div class="hg" style="top:167.7px;left:661.0px"></div>
<div style="left:0;top:132.9px;width:724px;height:1.9px;background:#676767"></div>
<div style="left:0;top:184.0px;width:724px;height:1.1px;background:#a6a6a6"></div>
<div style="left:0;top:185.1px;width:724px;height:1.5px;background:#5c5c5c"></div>
<div class="vd" style="left:38.5px"></div>
<div class="vd" style="left:146.5px"></div>
<div class="vd" style="left:204.5px"></div>
<div class="vd" style="left:405.5px"></div>
<div class="vd" style="left:479.5px"></div>
<div class="vd" style="left:552.5px"></div>
<div class="vd" style="left:660.5px"></div>
<div class="hd" style="top:202.47px"></div>
<div class="hd" style="top:219.74px"></div>
<div class="hd" style="top:237.01px"></div>
<div class="hd" style="top:254.28px"></div>
<div class="hd" style="top:271.55px"></div>
<div class="hd" style="top:288.82px"></div>
<div class="hd" style="top:306.09px"></div>
<div class="hd" style="top:323.36px"></div>
<div class="hd" style="top:340.63px"></div>
<div class="hd" style="top:357.90px"></div>
<div class="hd" style="top:375.17px"></div>
<div class="hd" style="top:392.44px"></div>
<div class="hd" style="top:409.71px"></div>
<div class="ttl" style="left:147.0px;top:20.6px;width:58px"><b>자재실</b><b>입출고</b><b>내역</b></div>
<div class="mono" style="left:273.5px;top:70.5px;width:131.5px">Residual QTY :</div>
<div class="c" style="left:406.0px;top:67.87px;width:74.0px;text-align:right;padding-right:1px;"><b style="transform:scaleX(0.97)">15715</b></div>
<svg style="left:57.5px;top:39px" width="72" height="78" viewBox="84 204 72 78">
<ellipse cx="119.6" cy="242.4" rx="32.9" ry="35.8" fill="#0000f6"/>
<ellipse cx="119.3" cy="242.4" rx="28.2" ry="30.1" fill="none" stroke="#fff" stroke-width="1.9"/>
<path d="M146.2 222H157V247.6H147.6Z" fill="#fff"/>
<path d="M123 225.8H146.6V228.4H124.7ZM126.9 231.8H148V234.4H128.6ZM130.7 237.6H148.4V240.2H132.4ZM133 243.4H149V246.2H136Z" fill="#fff"/>
<path d="M144.6 226.8H149.6V229.4H145.6ZM146.8 232.8H151.6V235H147.4ZM148 238H152.4V240.8H148.2ZM148.4 244H152.6V245.6H148.4Z" fill="#0000f6"/>
<path d="M90 240.6L112.6 222.6M92.6 246.4L120.4 225.6" fill="none" stroke="#fff" stroke-width="2.1"/>
<path d="M111.2 222L127 245" fill="none" stroke="#fff" stroke-width="2.8"/>
<path d="M119.6 221L135.6 245.6" fill="none" stroke="#fff" stroke-width="2.5"/>
</svg>
<div class="c" style="left:0.0px;top:150.97px;width:39.0px;"><b style="transform:scaleX(0.98)">NO</b></div>
<div class="c" style="left:39.0px;top:150.97px;width:108.0px;"><b style="transform:scaleX(0.945)">PART NAME</b></div>
<div class="c s" style="left:147.0px;top:150.97px;width:58.0px;font-size:10.8px;"><b style="transform:scaleX(1.0)">LOCATION</b></div>
<div class="c" style="left:205.0px;top:150.97px;width:201.0px;"><b style="transform:scaleX(0.96)">PART NO</b></div>
<div class="c k" style="left:406.0px;top:139.47px;width:74.0px;"><b>입고</b></div>
<div class="c" style="left:406.0px;top:160.37px;width:74.0px;"><b>QTY</b></div>
<div class="c k" style="left:480.0px;top:149.37px;width:73.0px;word-spacing:2.5px;"><b>입고 날짜</b></div>
<div class="c" style="left:553.0px;top:150.97px;width:108.0px;"><b style="transform:scaleX(1.16)">M/N</b></div>
<div class="c k l" style="left:661.0px;top:132.87px;width:73.0px;padding-left:9px;word-spacing:2px;"><b>출하 날짜</b></div>
<div class="c k l" style="left:661.0px;top:167.26px;width:73.0px;padding-left:9px;word-spacing:2px;"><b>출하 수량</b></div>
<div class="c" style="left:0.0px;top:185.60px;width:39.0px;"><b style="transform:scaleX(0.95)">1</b></div>
<div class="c" style="left:39.0px;top:185.60px;width:108.0px;"><b>CAP ELECT</b></div>
<div class="c sf" style="left:147.0px;top:185.90px;width:58.0px;"><b>807<i>호</i></b></div>
<div class="c l" style="left:205.0px;top:185.60px;width:201.0px;padding-left:2.4px;"><b style="transform:scaleX(0.934)">NXH 35V 3300uF (16*31.5)</b></div>
<div class="c" style="left:406.0px;top:185.60px;width:74.0px;"><b style="transform:scaleX(0.926)">100 EA</b></div>
<div class="c" style="left:480.0px;top:185.60px;width:73.0px;"><b>25.04.08</b></div>
<div class="c s" style="left:553.0px;top:186.00px;width:108.0px;"><b style="transform:scaleX(0.955)">20250408-01</b></div>
<div class="c" style="left:0.0px;top:202.87px;width:39.0px;"><b style="transform:scaleX(0.95)">2</b></div>
<div class="c" style="left:39.0px;top:202.87px;width:108.0px;"><b>CAP ELECT</b></div>
<div class="c sf" style="left:147.0px;top:203.17px;width:58.0px;"><b>807<i>호</i></b></div>
<div class="c l" style="left:205.0px;top:202.87px;width:201.0px;padding-left:2.4px;"><b style="transform:scaleX(0.934)">NXH 35V 2200uF (16*25)</b></div>
<div class="c" style="left:406.0px;top:202.87px;width:74.0px;"><b style="transform:scaleX(0.926)">150 EA</b></div>
<div class="c" style="left:480.0px;top:202.87px;width:73.0px;"><b>25.04.08</b></div>
<div class="c s" style="left:553.0px;top:203.27px;width:108.0px;"><b style="transform:scaleX(0.955)">20250408-01</b></div>
<div class="c" style="left:0.0px;top:220.14px;width:39.0px;"><b style="transform:scaleX(0.95)">3</b></div>
<div class="c" style="left:39.0px;top:220.14px;width:108.0px;"><b>CAP ELECT</b></div>
<div class="c sf" style="left:147.0px;top:220.44px;width:58.0px;"><b>807<i>호</i></b></div>
<div class="c l" style="left:205.0px;top:220.14px;width:201.0px;padding-left:2.4px;"><b style="transform:scaleX(0.934)">NFA 400V 68uF (16*25)</b></div>
<div class="c" style="left:406.0px;top:220.14px;width:74.0px;"><b style="transform:scaleX(0.926)">400 EA</b></div>
<div class="c" style="left:480.0px;top:220.14px;width:73.0px;"><b>25.04.08</b></div>
<div class="c s" style="left:553.0px;top:220.54px;width:108.0px;"><b style="transform:scaleX(0.955)">20250408-01</b></div>
<div class="c" style="left:0.0px;top:237.41px;width:39.0px;"><b style="transform:scaleX(0.95)">4</b></div>
<div class="c" style="left:39.0px;top:237.41px;width:108.0px;"><b>CAP ELECT</b></div>
<div class="c sf" style="left:147.0px;top:237.71px;width:58.0px;"><b>807<i>호</i></b></div>
<div class="c l y" style="left:205.0px;top:237.41px;width:201.0px;padding-left:2.4px;"><b style="transform:scaleX(0.934)">NHA 250V 100uF (16*25)</b></div>
<div class="c" style="left:406.0px;top:237.41px;width:74.0px;"><b style="transform:scaleX(0.926)">540 EA</b></div>
<div class="c" style="left:480.0px;top:237.41px;width:73.0px;"><b>25.04.08</b></div>
<div class="c s" style="left:553.0px;top:237.81px;width:108.0px;"><b style="transform:scaleX(0.955)">20250408-01</b></div>
<div class="c" style="left:0.0px;top:254.68px;width:39.0px;"><b style="transform:scaleX(0.95)">5</b></div>
<div class="c" style="left:39.0px;top:254.68px;width:108.0px;"><b>CAP ELECT</b></div>
<div class="c sf" style="left:147.0px;top:254.98px;width:58.0px;"><b>807<i>호</i></b></div>
<div class="c l y" style="left:205.0px;top:254.68px;width:201.0px;padding-left:2.4px;"><b style="transform:scaleX(0.934)">KMG 63V 1000uF (16*25)</b></div>
<div class="c" style="left:406.0px;top:254.68px;width:74.0px;"><b style="transform:scaleX(0.926)">500 EA</b></div>
<div class="c" style="left:480.0px;top:254.68px;width:73.0px;"><b>25.04.08</b></div>
<div class="c s" style="left:553.0px;top:255.08px;width:108.0px;"><b style="transform:scaleX(0.955)">20250408-01</b></div>
<div class="c" style="left:0.0px;top:271.95px;width:39.0px;"><b style="transform:scaleX(0.95)">6</b></div>
<div class="c" style="left:39.0px;top:271.95px;width:108.0px;"><b>CAP ELECT</b></div>
<div class="c sf" style="left:147.0px;top:272.25px;width:58.0px;"><b>807<i>호</i></b></div>
<div class="c l" style="left:205.0px;top:271.95px;width:201.0px;padding-left:2.4px;"><b style="transform:scaleX(0.934)">KMF 450V 82uF (18*31.5)</b></div>
<div class="c" style="left:406.0px;top:271.95px;width:74.0px;"><b style="transform:scaleX(0.926)">71 EA</b></div>
<div class="c" style="left:480.0px;top:271.95px;width:73.0px;"><b>25.04.08</b></div>
<div class="c s" style="left:553.0px;top:272.35px;width:108.0px;"><b style="transform:scaleX(0.955)">20250408-01</b></div>
<div class="c" style="left:0.0px;top:289.22px;width:39.0px;"><b style="transform:scaleX(0.95)">7</b></div>
<div class="c" style="left:39.0px;top:289.22px;width:108.0px;"><b>CAP ELECT</b></div>
<div class="c sf" style="left:147.0px;top:289.52px;width:58.0px;"><b>807<i>호</i></b></div>
<div class="c l" style="left:205.0px;top:289.22px;width:201.0px;padding-left:2.4px;"><b style="transform:scaleX(0.934)">NFC 450V 82uF (18*31.5)</b></div>
<div class="c" style="left:406.0px;top:289.22px;width:74.0px;"><b style="transform:scaleX(0.926)">61 EA</b></div>
<div class="c" style="left:480.0px;top:289.22px;width:73.0px;"><b>25.04.08</b></div>
<div class="c s" style="left:553.0px;top:289.62px;width:108.0px;"><b style="transform:scaleX(0.955)">20250408-01</b></div>
<div class="c" style="left:0.0px;top:306.49px;width:39.0px;"><b style="transform:scaleX(0.95)">8</b></div>
<div class="c" style="left:39.0px;top:306.49px;width:108.0px;"><b>CAP ELECT</b></div>
<div class="c sf" style="left:147.0px;top:306.79px;width:58.0px;"><b>807<i>호</i></b></div>
<div class="c l y" style="left:205.0px;top:306.49px;width:201.0px;padding-left:2.4px;"><b style="transform:scaleX(0.934)">NFC 400V 120uF (18*31.5)</b></div>
<div class="c" style="left:406.0px;top:306.49px;width:74.0px;"><b style="transform:scaleX(0.926)">129 EA</b></div>
<div class="c" style="left:480.0px;top:306.49px;width:73.0px;"><b>25.04.08</b></div>
<div class="c s" style="left:553.0px;top:306.89px;width:108.0px;"><b style="transform:scaleX(0.955)">20250408-01</b></div>
<div class="c" style="left:0.0px;top:323.76px;width:39.0px;"><b style="transform:scaleX(0.95)">9</b></div>
<div class="c" style="left:39.0px;top:323.76px;width:108.0px;"><b>CAP ELECT</b></div>
<div class="c sf" style="left:147.0px;top:324.06px;width:58.0px;"><b>807<i>호</i></b></div>
<div class="c l y" style="left:205.0px;top:323.76px;width:201.0px;padding-left:2.4px;"><b style="transform:scaleX(0.934)">NHA 250V 100uF (16*25)</b></div>
<div class="c" style="left:406.0px;top:323.76px;width:74.0px;"><b style="transform:scaleX(0.926)">140 EA</b></div>
<div class="c" style="left:480.0px;top:323.76px;width:73.0px;"><b>25.04.08</b></div>
<div class="c s" style="left:553.0px;top:324.16px;width:108.0px;"><b style="transform:scaleX(0.955)">20250408-02</b></div>
<div class="c" style="left:0.0px;top:341.03px;width:39.0px;"><b style="transform:scaleX(0.95)">10</b></div>
<div class="c" style="left:39.0px;top:341.03px;width:108.0px;"><b>CAP ELECT</b></div>
<div class="c sf" style="left:147.0px;top:341.33px;width:58.0px;"><b>807<i>호</i></b></div>
<div class="c l y" style="left:205.0px;top:341.03px;width:201.0px;padding-left:2.4px;"><b style="transform:scaleX(0.934)">KMG 63V 1000uF (16*25)</b></div>
<div class="c" style="left:406.0px;top:341.03px;width:74.0px;"><b style="transform:scaleX(0.926)">500 EA</b></div>
<div class="c" style="left:480.0px;top:341.03px;width:73.0px;"><b>25.04.08</b></div>
<div class="c s" style="left:553.0px;top:341.43px;width:108.0px;"><b style="transform:scaleX(0.955)">20250408-02</b></div>
<div class="c" style="left:0.0px;top:358.30px;width:39.0px;"><b style="transform:scaleX(0.95)">11</b></div>
<div class="c" style="left:39.0px;top:358.30px;width:108.0px;"><b>CAP ELECT</b></div>
<div class="c sf" style="left:147.0px;top:358.60px;width:58.0px;"><b>807<i>호</i></b></div>
<div class="c l y" style="left:205.0px;top:358.30px;width:201.0px;padding-left:2.4px;"><b style="transform:scaleX(0.934)">KMG 63V 1000uF (16*25)</b></div>
<div class="c" style="left:406.0px;top:358.30px;width:74.0px;"><b style="transform:scaleX(0.926)">200 EA</b></div>
<div class="c" style="left:480.0px;top:358.30px;width:73.0px;"><b>25.04.08</b></div>
<div class="c s" style="left:553.0px;top:358.70px;width:108.0px;"><b style="transform:scaleX(0.955)">20250408-03</b></div>
<div class="c" style="left:0.0px;top:375.57px;width:39.0px;"><b style="transform:scaleX(0.95)">12</b></div>
<div class="c" style="left:39.0px;top:375.57px;width:108.0px;"><b>CAP ELECT</b></div>
<div class="c sf" style="left:147.0px;top:375.87px;width:58.0px;"><b>807<i>호</i></b></div>
<div class="c l y" style="left:205.0px;top:375.57px;width:201.0px;padding-left:2.4px;"><b style="transform:scaleX(0.934)">NXH 10V 4700uF (12.5*30)</b></div>
<div class="c" style="left:406.0px;top:375.57px;width:74.0px;"><b style="transform:scaleX(0.926)">161 EA</b></div>
<div class="c" style="left:480.0px;top:375.57px;width:73.0px;"><b>25.04.08</b></div>
<div class="c s" style="left:553.0px;top:375.97px;width:108.0px;"><b style="transform:scaleX(0.955)">20250408-01</b></div>
<div class="c" style="left:0.0px;top:392.84px;width:39.0px;"><b style="transform:scaleX(0.95)">13</b></div>
<div class="c" style="left:39.0px;top:392.84px;width:108.0px;"><b>CAP ELECT</b></div>
<div class="c sf" style="left:147.0px;top:393.14px;width:58.0px;"><b>807<i>호</i></b></div>
<div class="c l" style="left:205.0px;top:392.84px;width:201.0px;padding-left:2.4px;"><b style="transform:scaleX(0.934)">KMG 25V 2200uF (12.5*30)</b></div>
<div class="c" style="left:406.0px;top:392.84px;width:74.0px;"><b style="transform:scaleX(0.926)">579 EA</b></div>
<div class="c" style="left:480.0px;top:392.84px;width:73.0px;"><b>25.04.08</b></div>
<div class="c s" style="left:553.0px;top:393.24px;width:108.0px;"><b style="transform:scaleX(0.955)">20250408-01</b></div>
</div>
</body></html>
